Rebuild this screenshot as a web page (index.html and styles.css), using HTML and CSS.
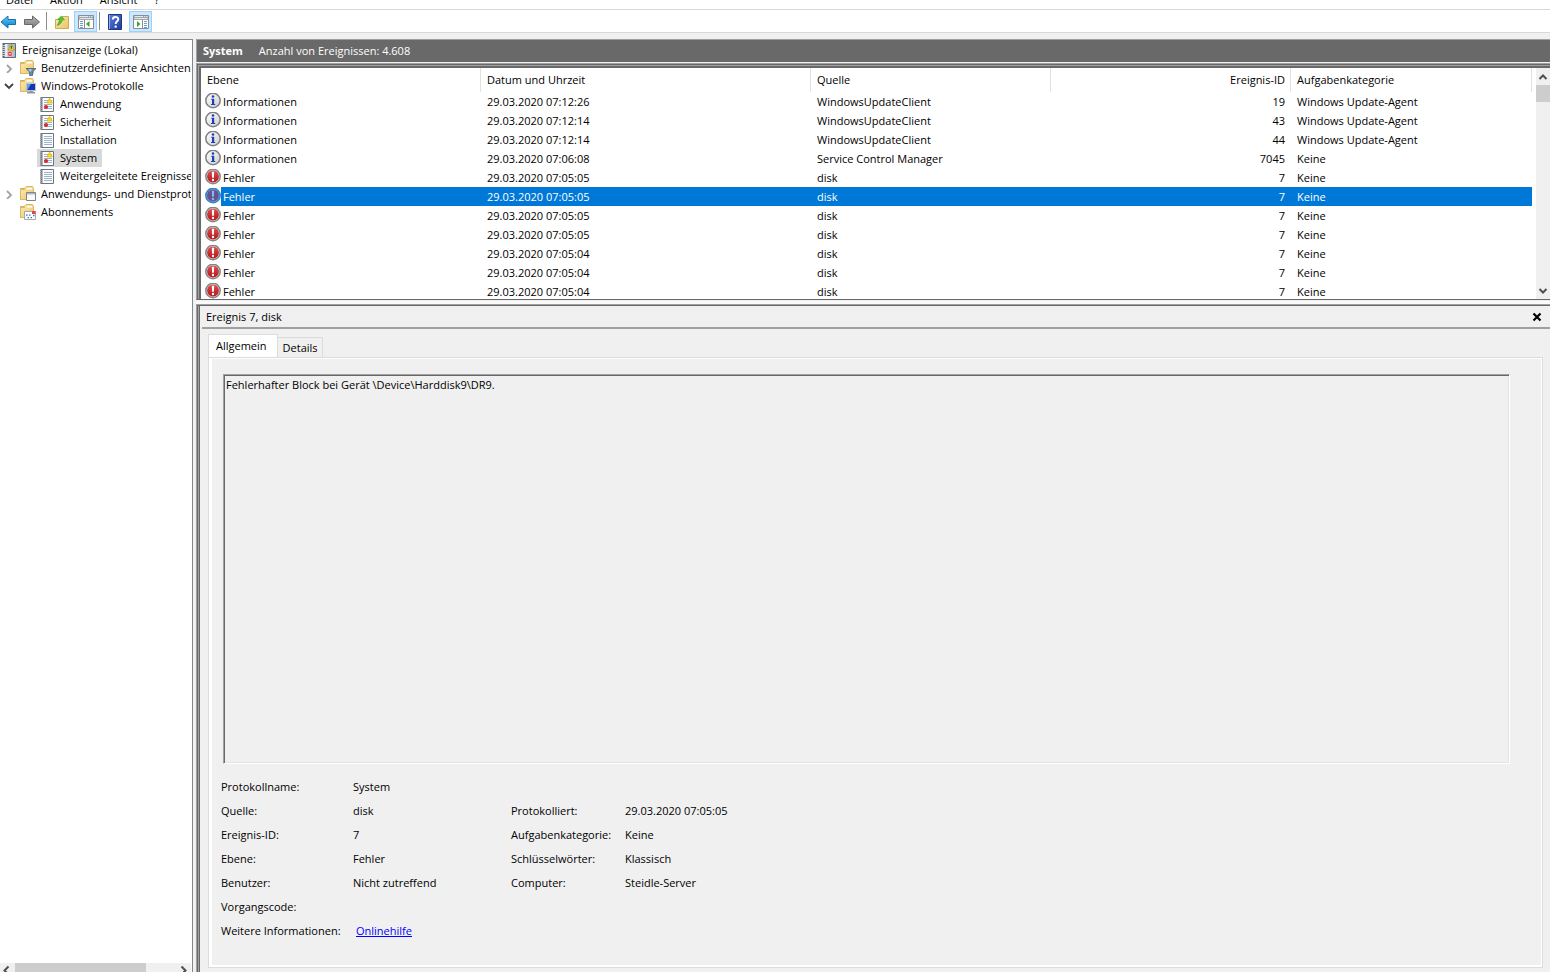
FILE: index.html
```html
<!DOCTYPE html>
<html lang="de">
<head>
<meta charset="utf-8">
<title>Ereignisanzeige</title>
<link rel="stylesheet" href="styles.css">
</head>
<body>
<svg class="defs" aria-hidden="true">
  <defs>
    <linearGradient id="g-blue" x1="0" y1="0" x2="0" y2="1"><stop offset="0" stop-color="#7fd0f5"/><stop offset=".5" stop-color="#2fa4e4"/><stop offset="1" stop-color="#1482cf"/></linearGradient>
    <linearGradient id="g-gray" x1="0" y1="0" x2="0" y2="1"><stop offset="0" stop-color="#b5b5b5"/><stop offset="1" stop-color="#7b7b7b"/></linearGradient>
    <linearGradient id="g-red" x1="0" y1="0" x2="0" y2="1"><stop offset="0" stop-color="#dc5050"/><stop offset="1" stop-color="#b81418"/></linearGradient>
    <linearGradient id="g-fold" x1="0" y1="0" x2="1" y2="1"><stop offset="0" stop-color="#ffedb0"/><stop offset="1" stop-color="#e8c368"/></linearGradient>
    <linearGradient id="g-silver" x1="0" y1="0" x2="1" y2="1"><stop offset="0" stop-color="#fff"/><stop offset="1" stop-color="#cfcfcf"/></linearGradient>
    <linearGradient id="g-help" x1="0" y1="0" x2="1" y2="1"><stop offset="0" stop-color="#5d7fe0"/><stop offset="1" stop-color="#1b3a9c"/></linearGradient>
  </defs>
  <symbol id="i-info" viewBox="0 0 16 16"><circle cx="8" cy="7.5" r="7.2" fill="url(#g-silver)" stroke="#808080" stroke-width="1.5"/><circle cx="8" cy="3.5" r="1.3" fill="#1d3fb8"/><path d="M6.2 5.8H9.2V11.1H10.2V12.1H6V11.1H7V6.8H6.2Z" fill="#1d3fb8"/></symbol>
  <symbol id="i-error" viewBox="0 0 16 16"><circle cx="8" cy="7.5" r="7.2" fill="#e0e0e0" stroke="#858585" stroke-width="1.5"/><circle cx="8" cy="7.5" r="5.9" fill="url(#g-red)"/><path d="M6.8 2.7H9.2L8.9 8.8H7.1Z" fill="#fff"/><circle cx="8" cy="11" r="1.2" fill="#fff"/></symbol>
  <symbol id="i-error-sel" viewBox="0 0 16 16"><circle cx="8" cy="7.5" r="7.2" fill="#70aee0" stroke="#3d80bb" stroke-width="1.5"/><circle cx="8" cy="7.5" r="5.9" fill="#625394"/><path d="M6.8 2.7H9.2L8.9 8.8H7.1Z" fill="#86b9ed"/><circle cx="8" cy="11" r="1.2" fill="#86b9ed"/></symbol>
  <symbol id="i-folder" viewBox="0 0 16 16"><path d="M.5 2.5H5V13.5H.5Z" fill="#edcd7b" stroke="#d3ae58"/><path d="M4.5 2.5L6 .5H12.5L13.5 2.5V13.5H.5V3.5H4.5Z" fill="url(#g-fold)" stroke="#dcb968"/><path d="M7 2H12V3.5H7Z" fill="#fff"/></symbol>
  <symbol id="i-views" viewBox="0 0 16 16"><use href="#i-folder"/><path d="M6 8.5H16L12.5 12V15.5L9.7 16V12Z" fill="#668bb0" stroke="#3f607f" stroke-width=".8"/><path d="M8 9.3H12L10.5 12Z" fill="#b6d0e4"/></symbol>
  <symbol id="i-winlogs" viewBox="0 0 16 16"><use href="#i-folder"/><path d="M6.5 5.5H15.5V12.5H6.5Z" fill="#1235b5" stroke="#bac4d4"/><path d="M7 6H11L7.5 12H7Z" fill="#5f9dec"/><path d="M9.5 13H12.5V14H15V15.5H7V14H9.5Z" fill="#8b98a6"/></symbol>
  <symbol id="i-apps" viewBox="0 0 16 16"><use href="#i-folder"/><path d="M6.5 6.5H15.5V14.5H6.5Z" fill="#fafafa" stroke="#838383"/><path d="M7 7H15V8.6H7Z" fill="#b5bec9"/></symbol>
  <symbol id="i-subs" viewBox="0 0 16 16"><use href="#i-folder"/><path d="M4.5 7.5H15.5V15.5H4.5Z" fill="#fff" stroke="#9caab9"/><path d="M12 7H15.5V10H12Z" fill="#e24747"/><path d="M6 11.2H7.7M9 11.2H10.5M7.5 13.6H9M10.5 13.6H12M13 11.5H14.5" stroke="#4978ac" stroke-width="1.3"/></symbol>
  <symbol id="i-log" viewBox="0 0 16 16"><path d="M2.5 1.5H14.5V15.5H2.5Z" fill="#fdfdfd" stroke="#6c7680"/><path d="M2.5 1V16" stroke="#6c7680" stroke-width="2"/><path d="M1 2.5H3M1 4.5H3M1 6.5H3M1 8.5H3M1 10.5H3M1 12.5H3M1 14.5H3" stroke="#9a9fa5"/><path d="M5 4.5H13M5 6.5H13M5 8.5H13M5 10.5H13M5 12.5H13" stroke="#9bb4cc"/></symbol>
  <symbol id="i-alert" viewBox="0 0 16 16"><use href="#i-log"/><path d="M10.6 2.2L13.3 7H7.9Z" fill="#f9df29" stroke="#dcb800" stroke-width=".8"/><circle cx="7" cy="11" r="2.1" fill="#db2830"/></symbol>
  <symbol id="i-root" viewBox="0 0 16 16"><path d="M2.5 1.5H14.5V15.5H2.5Z" fill="#a9bccc" stroke="#5d6f80"/><path d="M4 2H6.5V15H4Z" fill="#e6edf2"/><path d="M2.5 1V16" stroke="#59636c" stroke-width="2"/><path d="M1 3.5H4M1 5.5H4M1 7.5H4M1 9.5H4M1 11.5H4M1 13.5H4" stroke="#c8c8c8"/><path d="M10.3 2.2L13.6 8H7Z" fill="#f7d72c" stroke="#b49300" stroke-width=".7"/><path d="M10.3 4V6.8" stroke="#333"/><circle cx="9" cy="11.8" r="2.7" fill="#db3540" stroke="#fff" stroke-width=".6"/><path d="M7.6 11.8H10.4" stroke="#fff"/></symbol>
  <symbol id="i-right" viewBox="0 0 10 10"><path d="M3 2L7 6L3 10" fill="none" stroke="#a3a3a3" stroke-width="1.8"/></symbol>
  <symbol id="i-down" viewBox="0 0 10 10"><path d="M1 3L5 7L9 3" fill="none" stroke="#404040" stroke-width="1.8"/></symbol>
  <symbol id="i-pane" viewBox="0 0 16 14"><path d="M.5 .5H15.5V13.5H.5Z" fill="#fff" stroke="#888e94"/><path d="M1 1H15V5H1Z" fill="#a1a8ae"/><path d="M1.5 1.5H10M11 1.5H12M13 1.5H14.5M1.5 3.5H14.5" stroke="#e4e6e8"/></symbol>
</svg>

<div class="window">
  <nav class="menu" aria-label="Menü">
    <button>Datei</button><button>Aktion</button><button>Ansicht</button><button>?</button>
  </nav>
  <div class="toolbar" role="toolbar">
    <button class="tool" aria-label="Zurück"><svg width="18" height="16" viewBox="0 0 18 16"><path d="M1 8L8 2V5.5H15.5V10.5H8V14Z" fill="url(#g-blue)" stroke="#1b6ea9"/></svg></button>
    <button class="tool" aria-label="Vorwärts"><svg width="18" height="16" viewBox="0 0 18 16"><path d="M16.5 8L9.5 2V5.5H1.5V10.5H9.5V14Z" fill="url(#g-gray)" stroke="#686868"/></svg></button>
    <span class="rule"></span>
    <button class="tool tool-up" aria-label="Nach oben"><svg width="16" height="16" viewBox="0 0 16 16"><path d="M1.5 5.5H7L8.5 2.5H14.5V14.5H1.5Z" fill="url(#g-fold)" stroke="#d0aa55"/><path d="M3 11.5C4 10 5 8 5.5 5.5L3.5 5.5L7.5 2L10.5 5.8H8.5C8 8.5 6 10.8 3 11.5Z" fill="#55c32f" stroke="#3ea025" stroke-width=".6"/></svg></button>
    <button class="tool pressed" aria-label="Konsolenstruktur" aria-pressed="true"><svg width="16" height="14" viewBox="0 0 16 14"><use href="#i-pane"/><path d="M6.5 5V13" stroke="#888e94"/><path d="M2 6.5H5M2 8.5H5M2 10.5H5M2 12.5H5" stroke="#6d9cc8"/><path d="M11.5 6V12L8 9Z" fill="#35a52b"/></svg></button>
    <span class="rule"></span>
    <button class="tool tool-help" aria-label="Hilfe"><svg width="14" height="16" viewBox="0 0 14 16"><path d="M.5 .5H13.5V15.5H.5Z" fill="url(#g-help)" stroke="#1d3688"/><path d="M1.5 1V15" stroke="#9aaee8"/><path d="M4.8 5.4C4.8 2.2 10.3 2.2 10.3 5.3C10.3 7.4 7.7 7.3 7.7 10" fill="none" stroke="#fff" stroke-width="1.9"/><circle cx="7.7" cy="12.6" r="1.2" fill="#fff"/></svg></button>
    <button class="tool pressed" aria-label="Aktionsbereich" aria-pressed="true"><svg width="16" height="14" viewBox="0 0 16 14"><use href="#i-pane"/><path d="M9.5 5V13" stroke="#888e94"/><path d="M11 6.5H14M11 8.5H14M11 10.5H14M11 12.5H14" stroke="#6d9cc8"/><path d="M4 6V12L7.5 9Z" fill="#35a52b"/></svg></button>
  </div>

  <div class="body">
    <aside class="side">
      <ul class="tree" role="tree">
        <li class="l0"><svg class="ic"><use href="#i-root"/></svg><span>Ereignisanzeige (Lokal)</span></li>
        <li class="l1"><svg class="chev"><use href="#i-right"/></svg><svg class="ic"><use href="#i-views"/></svg><span>Benutzerdefinierte Ansichten</span></li>
        <li class="l1"><svg class="chev"><use href="#i-down"/></svg><svg class="ic"><use href="#i-winlogs"/></svg><span>Windows-Protokolle</span></li>
        <li class="l2"><svg class="ic"><use href="#i-alert"/></svg><span>Anwendung</span></li>
        <li class="l2"><svg class="ic"><use href="#i-alert"/></svg><span>Sicherheit</span></li>
        <li class="l2"><svg class="ic"><use href="#i-log"/></svg><span>Installation</span></li>
        <li class="l2 current"><svg class="ic"><use href="#i-alert"/></svg><span>System</span></li>
        <li class="l2"><svg class="ic"><use href="#i-log"/></svg><span>Weitergeleitete Ereignisse</span></li>
        <li class="l1"><svg class="chev"><use href="#i-right"/></svg><svg class="ic"><use href="#i-apps"/></svg><span>Anwendungs- und Dienstprotokolle</span></li>
        <li class="l1"><svg class="chev"></svg><svg class="ic"><use href="#i-subs"/></svg><span>Abonnements</span></li>
      </ul>
      <div class="hscroll">
        <button aria-label="Nach links"><svg width="15" height="15" viewBox="0 0 15 15"><path d="M8.5 3.5L4.5 7.5L8.5 11.5" fill="none" stroke="#505050" stroke-width="2"/></svg></button>
        <span class="hthumb"></span>
        <button class="hend" aria-label="Nach rechts"><svg width="15" height="15" viewBox="0 0 15 15"><path d="M5.5 3.5L9.5 7.5L5.5 11.5" fill="none" stroke="#505050" stroke-width="2"/></svg></button>
      </div>
    </aside>

    <main class="main">
      <header class="banner"><b>System</b><span>Anzahl von Ereignissen: 4.608</span></header>
      <section class="list">
        <table class="events">
          <colgroup><col class="c1"><col class="c2"><col class="c3"><col class="c3"><col></colgroup>
          <thead><tr><th>Ebene</th><th>Datum und Uhrzeit</th><th>Quelle</th><th class="num">Ereignis-ID</th><th>Aufgabenkategorie</th></tr></thead>
          <tbody>
            <tr><td><div class="lvl"><svg class="ic"><use href="#i-info"/></svg><span>Informationen</span></div></td><td>29.03.2020 07:12:26</td><td>WindowsUpdateClient</td><td class="num">19</td><td>Windows Update-Agent</td></tr>
            <tr><td><div class="lvl"><svg class="ic"><use href="#i-info"/></svg><span>Informationen</span></div></td><td>29.03.2020 07:12:14</td><td>WindowsUpdateClient</td><td class="num">43</td><td>Windows Update-Agent</td></tr>
            <tr><td><div class="lvl"><svg class="ic"><use href="#i-info"/></svg><span>Informationen</span></div></td><td>29.03.2020 07:12:14</td><td>WindowsUpdateClient</td><td class="num">44</td><td>Windows Update-Agent</td></tr>
            <tr><td><div class="lvl"><svg class="ic"><use href="#i-info"/></svg><span>Informationen</span></div></td><td>29.03.2020 07:06:08</td><td>Service Control Manager</td><td class="num">7045</td><td>Keine</td></tr>
            <tr><td><div class="lvl"><svg class="ic"><use href="#i-error"/></svg><span>Fehler</span></div></td><td>29.03.2020 07:05:05</td><td>disk</td><td class="num">7</td><td>Keine</td></tr>
            <tr class="selected"><td><div class="lvl"><svg class="ic"><use href="#i-error-sel"/></svg><span>Fehler</span></div></td><td>29.03.2020 07:05:05</td><td>disk</td><td class="num">7</td><td>Keine</td></tr>
            <tr><td><div class="lvl"><svg class="ic"><use href="#i-error"/></svg><span>Fehler</span></div></td><td>29.03.2020 07:05:05</td><td>disk</td><td class="num">7</td><td>Keine</td></tr>
            <tr><td><div class="lvl"><svg class="ic"><use href="#i-error"/></svg><span>Fehler</span></div></td><td>29.03.2020 07:05:05</td><td>disk</td><td class="num">7</td><td>Keine</td></tr>
            <tr><td><div class="lvl"><svg class="ic"><use href="#i-error"/></svg><span>Fehler</span></div></td><td>29.03.2020 07:05:04</td><td>disk</td><td class="num">7</td><td>Keine</td></tr>
            <tr><td><div class="lvl"><svg class="ic"><use href="#i-error"/></svg><span>Fehler</span></div></td><td>29.03.2020 07:05:04</td><td>disk</td><td class="num">7</td><td>Keine</td></tr>
            <tr><td><div class="lvl"><svg class="ic"><use href="#i-error"/></svg><span>Fehler</span></div></td><td>29.03.2020 07:05:04</td><td>disk</td><td class="num">7</td><td>Keine</td></tr>
          </tbody>
        </table>
        <div class="vscroll">
          <button aria-label="Nach oben blättern"><svg width="14" height="17" viewBox="0 0 14 17"><path d="M3.5 11L7 7.5L10.5 11" fill="none" stroke="#505050" stroke-width="2"/></svg></button>
          <span class="vthumb"></span>
          <button class="vend" aria-label="Nach unten blättern"><svg width="14" height="17" viewBox="0 0 14 17"><path d="M3.5 7L7 10.5L10.5 7" fill="none" stroke="#505050" stroke-width="2"/></svg></button>
        </div>
      </section>

      <section class="detail">
        <header class="detail-head"><span>Ereignis 7, disk</span><button aria-label="Schließen"><svg width="10" height="10" viewBox="0 0 10 10"><path d="M1.5 1.5L8.5 8.5M8.5 1.5L1.5 8.5" stroke="#000" stroke-width="2.2"/></svg></button></header>
        <div class="tabs" role="tablist">
          <button class="tab on" role="tab" aria-selected="true">Allgemein</button><button class="tab" role="tab" aria-selected="false">Details</button>
        </div>
        <div class="panel" role="tabpanel">
          <textarea class="message" readonly aria-label="Beschreibung">Fehlerhafter Block bei Gerät \Device\Harddisk9\DR9.</textarea>
          <dl class="props">
            <dt>Protokollname:</dt><dd class="wide">System</dd>
            <dt>Quelle:</dt><dd>disk</dd><dt>Protokolliert:</dt><dd>29.03.2020 07:05:05</dd>
            <dt>Ereignis-ID:</dt><dd>7</dd><dt>Aufgabenkategorie:</dt><dd>Keine</dd>
            <dt>Ebene:</dt><dd>Fehler</dd><dt>Schlüsselwörter:</dt><dd>Klassisch</dd>
            <dt>Benutzer:</dt><dd>Nicht zutreffend</dd><dt>Computer:</dt><dd>Steidle-Server</dd>
            <dt>Vorgangscode:</dt><dd class="wide"></dd>
            <dt>Weitere Informationen:</dt><dd class="wide link"><a href="#hilfe">Onlinehilfe</a></dd>
          </dl>
        </div>
      </section>
    </main>
  </div>
</div>
</body>
</html>
```
FILE: styles.css
```css
* { box-sizing: border-box; }
body {
  margin: 0;
  background: #f0f0f0;
  color: #000;
  font: 11px/18px "Open Sans", "Noto Sans", sans-serif;
}
button {
  font: inherit;
  color: inherit;
  background: none;
  border: 0;
  padding: 0;
  display: flex;
  align-items: center;
  justify-content: center;
}
svg { display: block; flex: none; }
.defs { position: absolute; width: 0; height: 0; }
.ic { width: 16px; height: 16px; }

.window { display: flex; flex-direction: column; height: 100vh; overflow: hidden; }

.menu {
  display: flex;
  align-items: flex-end;
  gap: 17px;
  height: 10px;
  padding: 0 6px;
  overflow: hidden;
  background: #fff;
  border-bottom: 1px solid #d8d8d8;
  flex: none;
}
.toolbar {
  display: flex;
  align-items: flex-end;
  height: 23px;
  background: #fff;
  border-bottom: 1px solid #d8d8d8;
  flex: none;
}
.tool { height: 21px; width: 23px; padding-right: 5px; }
.tool-up { width: 24px; padding: 0; }
.tool-help { width: 28px; padding: 0; }
.pressed { width: 23px; padding: 0; background: #cce8ff; border: 1px solid #99d1ff; }
.rule { width: 1px; height: 18px; background: #8c8c8c; margin: 0 3px 2px 0; }
.pressed + .rule { margin: 0 1px 2px 2px; }

.body { display: flex; flex: 1; min-height: 0; padding-top: 6px; }

.side {
  display: flex;
  flex-direction: column;
  width: 193px;
  flex: none;
  background: #fff;
  border-top: 1px solid #828790;
  border-right: 1px solid #828790;
  padding-right: 1px;
  overflow: hidden;
}
.tree { list-style: none; margin: 0; padding: 1px 0 0; flex: 1; min-height: 0; overflow: hidden; }
.tree li { display: flex; align-items: center; height: 18px; white-space: nowrap; }
.tree span { padding: 0 4px 0 5px; }
.l0 { padding-left: 1px; }
.l1 { padding-left: 4px; }
.l2 { padding-left: 39px; }
.chev { width: 10px; height: 10px; margin-right: 6px; }
.current { background: linear-gradient(#d9d9d9, #d9d9d9) 37px 0 / 65px 18px no-repeat; }

.hscroll { display: flex; height: 9px; overflow: hidden; background: #f0f0f0; flex: none; align-items: flex-start; }
.hthumb { width: 131px; height: 17px; background: #cdcdcd; }
.hend { margin-left: auto; }

.main { display: flex; flex-direction: column; flex: 1; min-width: 0; margin-left: 3px; }
.banner {
  display: flex;
  align-items: center;
  gap: 16px;
  height: 23px;
  padding-left: 6px;
  background: #696969;
  border-top: 1px solid #a0a0a0;
  border-left: 1px solid #a0a0a0;
  color: #fff;
  flex: none;
}
.list {
  display: flex;
  height: 237px;
  margin-top: 1px;
  padding: 4px 0 0 4px;
  background: #fff;
  border: 1px solid #a0a0a0;
  border-right: 0;
  border-bottom-color: #696969;
  box-shadow: inset 1px 1px #696969, inset 2px 2px #a0a0a0, inset 4px 4px #696969;
  overflow: hidden;
  flex: none;
}
.events { flex: 1; table-layout: fixed; border-collapse: separate; border-spacing: 0; align-self: flex-start; margin-right: 4px; }
.c1 { width: 280px; }
.c2 { width: 330px; }
.c3 { width: 240px; }
.events th { height: 24px; padding: 0 6px; text-align: left; font-weight: 400; border-right: 1px solid #e2e2e2; }
.events td { height: 19px; padding: 0 6px; white-space: nowrap; }
.events .num { text-align: right; padding-right: 5px; }
.events td.num { padding-right: 6px; }
.events td:first-child { padding: 0 0 0 4px; }
.lvl { display: flex; height: 19px; line-height: 19px; }
.lvl .ic { margin-top: 1px; }
.lvl span { flex: 1; padding-left: 2px; }
.selected { color: #fff; }
.selected td:not(:first-child), .selected .lvl span { background: #0078d7; }

.vscroll { display: flex; flex-direction: column; width: 14px; background: #f0f0f0; flex: none; }
.vthumb { height: 17px; background: #cdcdcd; }
.vend { margin-top: auto; }

.detail {
  display: flex;
  flex-direction: column;
  flex: 1;
  min-height: 0;
  margin-top: 4px;
  border-left: 1px solid #a0a0a0;
  border-top: 1px solid #a0a0a0;
  box-shadow: 0 -3px #fafafa, inset 1px 1px #696969, inset 2px 0 #a0a0a0, inset 3px 0 #696969;
  background: #f0f0f0;
  padding: 1px 0 4px 5px;
}
.detail-head {
  display: flex;
  align-items: center;
  justify-content: space-between;
  height: 23px;
  padding: 0 8px 0 4px;
  border-bottom: 2px solid #a0a0a0;
  flex: none;
}
.tabs { display: flex; align-items: flex-end; height: 28px; padding: 6px 0 0 6px; flex: none; }
.tab { height: 20px; padding: 0 4px 0 5px; border: 1px solid #dcdcdc; border-bottom: 0; border-left: 0; }
.tab.on { height: 23px; padding: 0 10px 0 7px; background: #fff; border-left: 1px solid #dcdcdc; }
.panel {
  display: flex;
  flex-direction: column;
  flex: 1;
  min-height: 0;
  margin: 0 7px 0 6px;
  border: 1px solid #dcdcdc;
  box-shadow: inset 3px 1px #fff, inset -1px -2px #fff;
  padding: 16px 32px 24px 12px;
}
.message {
  flex: 1;
  margin: 0 0 0 2px;
  min-height: 0;
  resize: none;
  font: inherit;
  padding: 1px 2px;
  background: #f0f0f0;
  border: 1px solid #a0a0a0;
  border-right-color: #fff;
  border-bottom-color: #fff;
  box-shadow: inset 1px 1px #696969, inset -1px -1px #e3e3e3;
  outline: 0;
}
.props { display: grid; grid-template-columns: 132px 158px 114px 1fr; grid-auto-rows: 24px; line-height: 24px; margin: 11px 0 0; white-space: nowrap; }
.props dd { margin: 0; }
.props .wide { grid-column: span 3; }
.props .link { padding-left: 3px; }
a { color: #00f; }
```
